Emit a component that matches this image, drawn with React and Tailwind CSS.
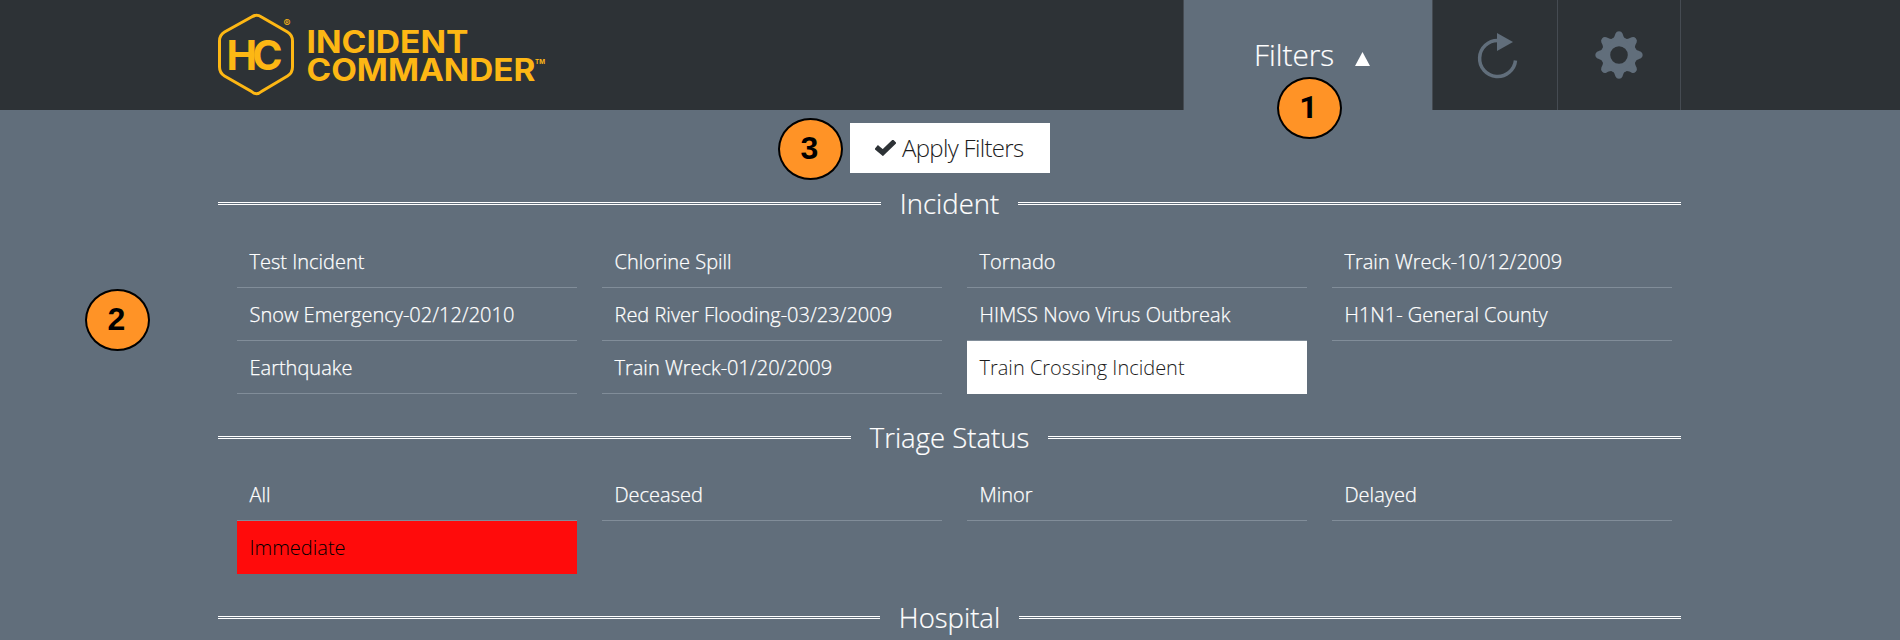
const INCIDENTS = [
  "Test Incident",
  "Chlorine Spill",
  "Tornado",
  "Train Wreck-10/12/2009",
  "Snow Emergency-02/12/2010",
  "Red River Flooding-03/23/2009",
  "HIMSS Novo Virus Outbreak",
  "H1N1- General County",
  "Earthquake",
  "Train Wreck-01/20/2009",
  "Train Crossing Incident",
];
const TRIAGE = ["All", "Deceased", "Minor", "Delayed", "Immediate"];

const ACTIVE = {
  "Train Crossing Incident": "bg-white text-[#1c1c1c] border-white",
  Immediate: "bg-[#ff0b0b] text-black border-[#ff0b0b]",
};

function Logo() {
  return (
    <svg className="block h-[110px] w-[330px]" viewBox="218 0 330 110" fill="#fdb714">
      <path
        d="M251.500 17 Q256.500 13.700 261.500 17 L287.500 32 Q292.500 35 292.500 41 V67 Q292.500 73 287.500 76 L261.500 91.500 Q256.500 96 251.500 91.500 L224.500 76 Q219.500 73 219.500 67 V41 Q219.500 35 224.500 32 Z"
        fill="none"
        stroke="#fdb714"
        strokeWidth="3"
      />
      <g fontFamily="Inter, sans-serif" fontWeight="700">
        <text x="226.500" y="70" fontSize="41" textLength="56" lengthAdjust="spacing">HC</text>
        <text fontSize="31" fontWeight="650">
          <tspan x="306.500" y="53.300" textLength="162" lengthAdjust="spacingAndGlyphs">INCIDENT</tspan>
          <tspan x="306.500" y="81.300" textLength="229" lengthAdjust="spacingAndGlyphs">COMMANDER</tspan>
        </text>
        <text x="535" y="63.500" fontSize="6.500" textLength="10" lengthAdjust="spacingAndGlyphs">TM</text>
        <text x="283.500" y="26.500" fontSize="10.500" fontWeight="500">®</text>
      </g>
    </svg>
  );
}

function Badge({ n, className }) {
  return (
    <div
      className={`absolute flex h-[62px] w-[65px] items-center justify-center rounded-[50%] border-2 border-black bg-[#ff9326] pr-[2px] text-[32px] leading-none font-bold text-black ${className}`}
    >
      {n}
    </div>
  );
}

function Heading({ children }) {
  return (
    <div className="flex h-[38px] items-center gap-[19px] text-[27.5px] leading-[38px] [-webkit-text-stroke:0.2px_white]">
      <span className="h-[3px] flex-1 border-y border-white" />
      <h2 className="pt-0.5">{children}</h2>
      <span className="h-[3px] flex-1 border-y border-white" />
    </div>
  );
}

function Options({ items }) {
  return (
    <ul className="grid grid-cols-4 gap-x-[25px] pr-[9px] pl-[19px] text-[20px]">
      {items.map((t) => (
        <li
          key={t}
          className={`h-[53px] border-b pl-[12.5px] leading-[54px] ${ACTIVE[t] || "border-[#818d99] [-webkit-text-stroke:0.25px_white]"}`}
        >
          {t}
        </li>
      ))}
    </ul>
  );
}

export default function App() {
  return (
    <div className="relative h-[640px] overflow-hidden bg-[#616e7b] font-['Open_Sans',sans-serif] font-light text-white">
      <header className="h-[110px] bg-[#2d3236]">
        <div className="ml-[218px] flex h-full w-[1463px]">
          <Logo />
          <nav className="ml-auto flex h-full">
            <div className="flex w-[249px] items-center border-l border-[#454b52] bg-[#616e7b] pl-[70px] text-[29.8px]">
              <span className="w-[81px] whitespace-nowrap [-webkit-text-stroke:0.2px_white]">Filters</span>
              <svg className="mt-[7px] ml-[20px] h-[14px] w-[15px]" viewBox="0 0 15 14">
                <path d="M7.500 0 15 14H0z" fill="#fff" />
              </svg>
            </div>
            <div className="flex w-[126px] items-center justify-center border-x border-[#454b52]">
              <svg className="ml-1 h-[50px] w-[42px]" viewBox="1476 30 42 50">
                <path d="M1498 40.500 A18 18 0 1 0 1515.500 60.500" fill="none" stroke="#616e7b" strokeWidth="3.500" />
                <path d="M1497 33 1513 42 1497 51z" fill="#616e7b" />
              </svg>
            </div>
            <div className="flex w-[123px] items-center justify-center border-r border-[#454b52]">
              <svg className="h-12 w-12" viewBox="-24 -24 48 48" fill="#616e7b">
                <circle r="13.300" fill="none" stroke="#616e7b" strokeWidth="9" />
                {[0, 45, 90, 135, 180, 225, 270, 315].map((a) => (
                  <path key={a} transform={`rotate(${a})`} d="M-8.500 -15 C-4.500 -17 -4.500 -19 -3.500 -21.500 Q-2.500 -23.700 0 -23.700 Q2.500 -23.700 3.500 -21.500 C4.500 -19 4.500 -17 8.500 -15z" />
                ))}
              </svg>
            </div>
          </nav>
        </div>
      </header>

      <main className="ml-[218px] w-[1463px]">
        <div className="flex pt-[13px] pl-[632px]">
          <button className="flex h-[50px] w-[200px] items-center bg-white pl-[25px] text-[24px] tracking-[-0.68px] text-[#1c1c1c]">
            <svg className="mr-[6px] h-4 w-[21px]" viewBox="0 0 21 16">
              <path d="M3.200 8.700 7.800 12.600 17.800 3" fill="none" stroke="#2d3236" strokeWidth="5.200" strokeLinecap="square" />
            </svg>
            <span className="whitespace-nowrap">Apply Filters</span>
          </button>
        </div>
        <section className="pt-[11px]">
          <Heading>Incident</Heading>
          <div className="h-[13px]" />
          <Options items={INCIDENTS} />
        </section>
        <section className="pt-6">
          <Heading>Triage Status</Heading>
          <div className="h-3" />
          <Options items={TRIAGE} />
        </section>
        <section className="pt-6">
          <Heading>Hospital</Heading>
        </section>
      </main>

      <Badge n="1" className="top-[77px] left-[1277px] pb-0.5 font-['Roboto',sans-serif]" />
      <Badge n="2" className="top-[289px] left-[85px] pb-0.5 font-['Liberation_Sans',sans-serif]" />
      <Badge n="3" className="top-[118px] left-[778px] pb-0.5 font-['Liberation_Sans',sans-serif]" />
    </div>
  );
}
